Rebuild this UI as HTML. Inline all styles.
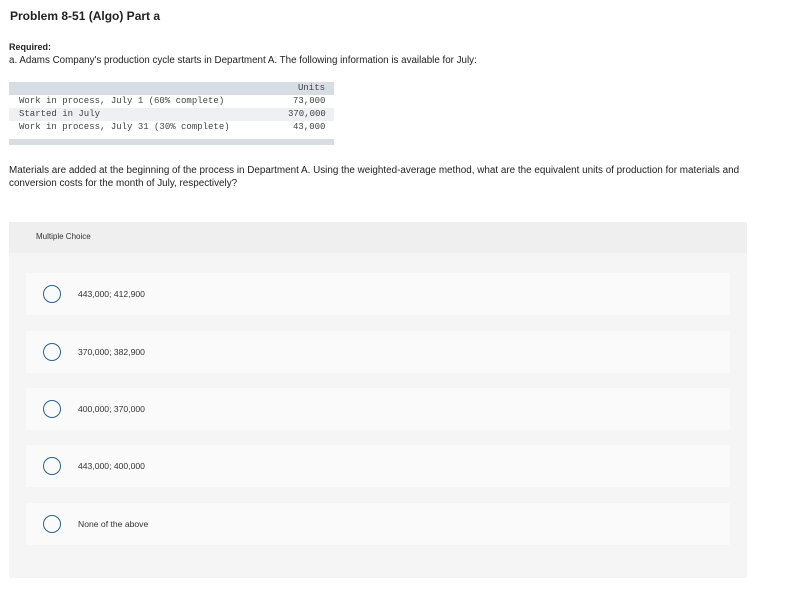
<html><head><style>
body{margin:0;background:#fff;font-family:"Liberation Sans",sans-serif;color:#222;width:811px;height:612px;overflow:hidden;position:relative}
.a{position:absolute;white-space:nowrap}
.m{font-family:"Liberation Mono",monospace;font-size:9px;color:#444}
.opt{position:absolute;left:26px;width:704px;height:42px;background:#fafafa}
.opt .c{position:absolute;left:17px;border:1.6px solid #2d5f8f;border-radius:50%;box-sizing:border-box;width:18px;height:18px;top:12px}
.opt .t{position:absolute;left:52px;top:16px;font-size:8.6px;color:#333}
</style></head><body>
<div class="a" style="left:10px;top:9px;font-size:12px;font-weight:bold;color:#222">Problem 8-51 (Algo) Part a</div>
<div class="a" style="left:9px;top:42px;font-size:9px;font-weight:bold">Required:</div>
<div class="a" style="left:9px;top:55px;font-size:9.8px">a. Adams Company's production cycle starts in Department A. The following information is available for July:</div>
<div class="a" style="left:9px;top:82px;width:325px;height:13px;background:#d8dce3"></div>
<div class="a m" style="left:298px;top:83px">Units</div>
<div class="a m" style="left:19px;top:96px">Work in process, July 1 (60% complete)</div>
<div class="a m" style="left:293px;top:96px">73,000</div>
<div class="a" style="left:9px;top:108px;width:325px;height:13px;background:#eef0f3"></div>
<div class="a m" style="left:19px;top:109px">Started in July</div>
<div class="a m" style="left:288px;top:109px">370,000</div>
<div class="a m" style="left:19px;top:122px">Work in process, July 31 (30% complete)</div>
<div class="a m" style="left:293px;top:122px">43,000</div>
<div class="a" style="left:9px;top:139px;width:325px;height:6px;background:#d8dce3"></div>
<div class="a" style="left:9px;top:164px;font-size:9.9px;line-height:13px;white-space:normal;width:760px">Materials are added at the beginning of the process in Department A. Using the weighted-average method, what are the equivalent units of production for materials and conversion costs for the month of July, respectively?</div>
<div class="a" style="left:9px;top:222px;width:738px;height:356px;background:#f5f5f5"></div>
<div class="a" style="left:9px;top:222px;width:738px;height:31px;background:#efefef"></div>
<div class="a" style="left:36px;top:232px;font-size:8px;color:#333">Multiple Choice</div>
<div class="opt" style="top:273px"><div class="c"></div><div class="t">443,000; 412,900</div></div>
<div class="opt" style="top:331px"><div class="c"></div><div class="t">370,000; 382,900</div></div>
<div class="opt" style="top:388px"><div class="c"></div><div class="t">400,000; 370,000</div></div>
<div class="opt" style="top:445px"><div class="c"></div><div class="t">443,000; 400,000</div></div>
<div class="opt" style="top:503px"><div class="c"></div><div class="t">None of the above</div></div>
</body></html>
